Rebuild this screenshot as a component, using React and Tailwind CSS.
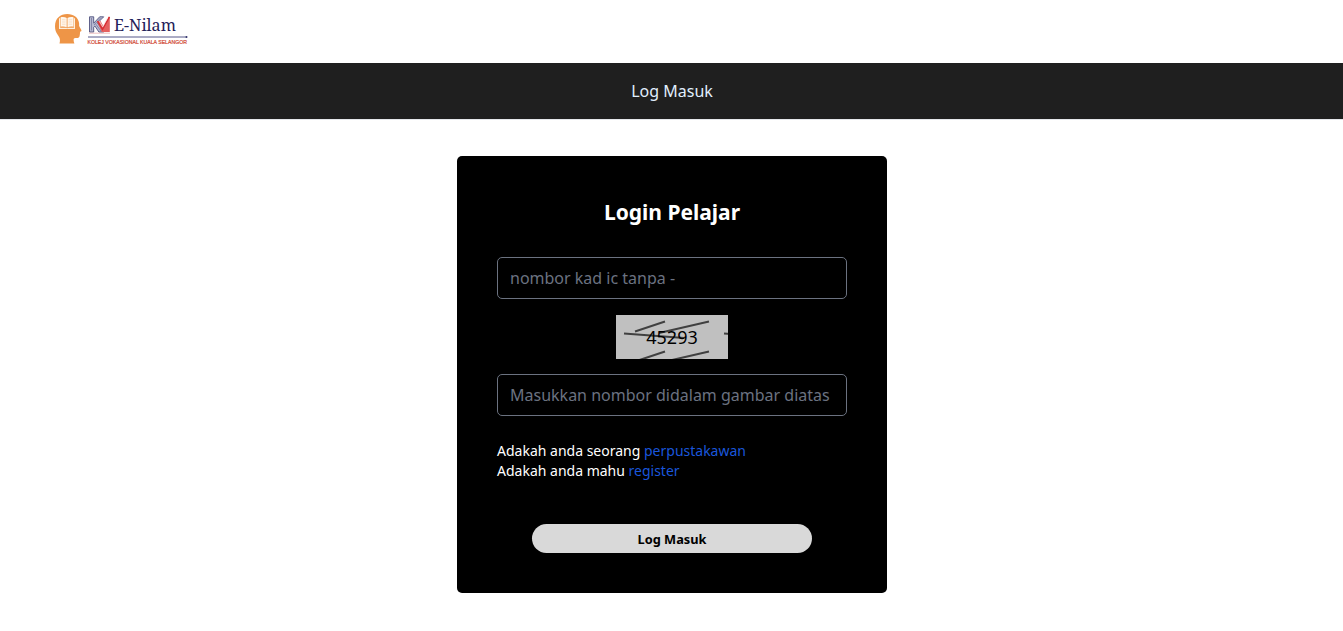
function Logo() {
  return (
    <svg width="160" height="40" viewBox="0 0 160 40" className="block overflow-visible" role="img" aria-label="E-Nilam">
      <path
        d="M5.500 33.500c.9-3.500.6-5.700-1.500-8.300C1.800 22.300 1 19.500 1 16.200 1 8.300 6.300 4 13.300 4c6.400 0 11.200 3.600 11.800 9.200.1 1.300-.1 2.200.2 3.100.5 1.200 1.700 2.700 2.100 3.900.2.800-.3 1.100-1.400 1.500.1 1.300-.1 2.500-.3 3.800-.2 1.900-1.200 2.600-3 2.600-1.900 0-3.200.2-3.100 1.700 0 1.300.3 2.500.8 3.700z"
        fill="#ee9547"
      />
      <path d="M5 8.300h1.200v9.500h6.300l.6.600.6-.6h6.200V8.300H21V19H5z" fill="#fdf0df" />
      <path d="M6.600 7.200c2.300-.5 4.600-.3 6.100.8v9.200c-1.700-.8-3.900-.9-6.100-.5zM13.500 8c1.500-1.100 3.700-1.300 6-.8v9.500c-2.200-.4-4.400-.3-6 .5z" fill="#fff7ec" />
      <path d="M8 9.800h3.500M8 12h3.500M8 14.200h3.500M14.700 9.800h3.500M14.700 12h3.500M14.700 14.200h3.500" stroke="#f7cfa8" strokeWidth=".6" />
      <path d="M35.500 6.800h4.200v6.400l6-6.400h4L43.500 13l6.400 9h-5l-4-6-1.200 1.200V22h-4.200z" fill="#b9bbd2" stroke="#50527f" strokeWidth=".9" />
      <path d="M37.500 8v12.500M40 15l6.600-7M41.800 14.200l5.500 7.200" stroke="#6c6e98" strokeWidth=".7" />
      <path d="M43 11.500l3.500-.5 2.800 5L54.500 6.800h1.300V22h-8z" fill="#e5605f" />
      <path d="M43.500 11l5 8.300L55.500 7" fill="none" stroke="#d62f35" strokeWidth="1.400" />
      <path d="M45.500 11.300l3.200 5.500L53.500 8" fill="none" stroke="#fbe4e4" strokeWidth=".8" />
      <path d="M35 23.200h21" stroke="#e6a3a3" strokeWidth=".7" />
      <text x="60" y="21" textLength="62" lengthAdjust="spacingAndGlyphs" fontSize="17" fill="#252159" className="font-['Noto_Serif','DejaVu_Serif','Liberation_Serif',serif]">
        E-Nilam
      </text>
      <path d="M34 27h99" stroke="#56588a" strokeWidth="1" />
      <circle cx="132.500" cy="27" r="1" fill="#34366c" />
      <text x="33.500" y="33.500" textLength="99.500" lengthAdjust="spacingAndGlyphs" fontSize="5.500" fill="#d0452f" stroke="#d0452f" strokeWidth=".2" className="font-['Liberation_Sans',sans-serif]">
        KOLEJ VOKASIONAL KUALA SELANGOR
      </text>
    </svg>
  );
}

function Captcha() {
  return (
    <div className="relative mx-auto mt-4 h-11 w-28 bg-[#c0c0c0]">
      <svg width="112" height="44" className="absolute inset-0">
        <defs>
          <pattern id="strokes" width="100" height="30" patternUnits="userSpaceOnUse">
            <path d="M19 16.500L49 6.500M43 18L93 6.500M8 18.500L68 23" stroke="#404040" strokeWidth="2" />
          </pattern>
        </defs>
        <rect width="112" height="44" fill="url(#strokes)" />
      </svg>
      <div className="relative text-center text-lg leading-[44px] text-black">45293</div>
    </div>
  );
}

const inputClass =
  "block h-[42px] w-full rounded-[5px] border border-[#6b7280] bg-black px-3 text-base text-white placeholder:text-[#6b7280] placeholder:opacity-100 outline-none";

export default function App() {
  return (
    <div className="min-h-[631px] bg-white font-['Noto_Sans',sans-serif] text-base">
      <header className="h-[63px] pt-2.5 pl-[54px]">
        <Logo />
      </header>
      <nav className="flex h-[57px] items-center justify-center border-b border-gray-200 bg-[#1f1f1f] pl-px text-[#e1effe]">
        <a href="#">Log Masuk</a>
      </nav>
      <main className="flex justify-center pt-9 pl-px">
        <form className="h-[437px] w-[430px] rounded-[5px] bg-black px-10 pt-10 text-white">
          <h1 className="text-center text-[21px] leading-8 font-bold">Login Pelajar</h1>
          <input className={`${inputClass} mt-[29px]`} placeholder="nombor kad ic tanpa -" />
          <Captcha />
          <input className={`${inputClass} mt-[15px]`} placeholder="Masukkan nombor didalam gambar diatas" />
          <div className="mt-[25px] text-sm">
            <p>
              Adakah anda seorang <a href="#" className="text-[#1a56db]">perpustakawan</a>
            </p>
            <p>
              Adakah anda mahu <a href="#" className="text-[#1a56db]">register</a>
            </p>
          </div>
          <button type="button" className="mx-auto mt-[43px] block h-[29px] w-[280px] rounded-full bg-[#d9d9d9] pt-0.5 text-[12.8px] font-bold text-black">
            Log Masuk
          </button>
        </form>
      </main>
    </div>
  );
}
